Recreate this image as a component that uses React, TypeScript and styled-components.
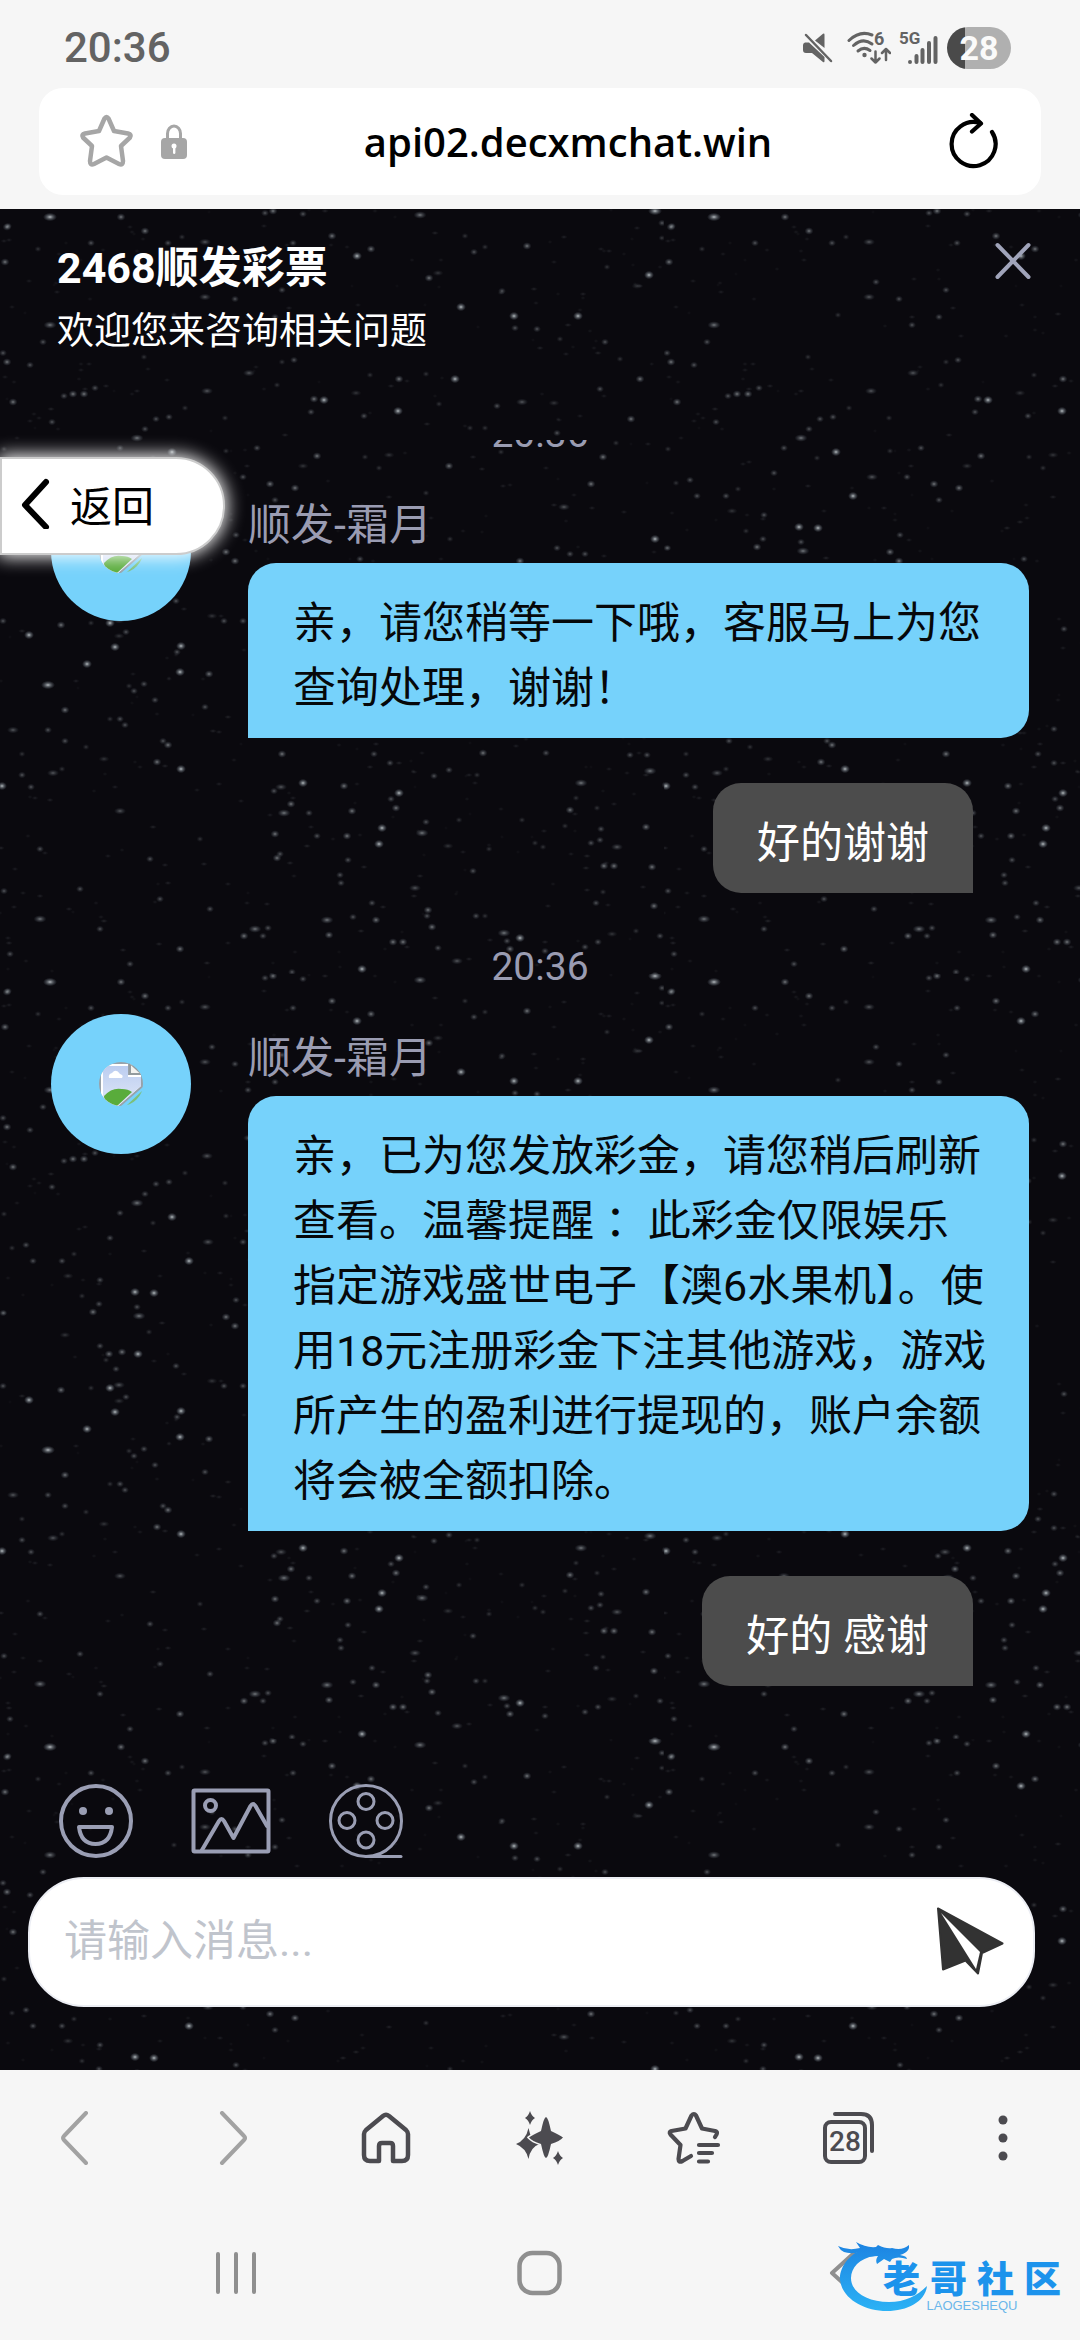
import React from "react";
import styled, { createGlobalStyle } from "styled-components";

const GlobalStyle = createGlobalStyle`
  *, *::before, *::after { box-sizing: border-box; }
  body {
    margin: 0;
    background: #f6f6f6;
    font-family: Roboto, "Noto Sans CJK SC", sans-serif;
  }
  button, input { font: inherit; color: inherit; }
`;

const Page = styled.div`
  display: flex;
  flex-direction: column;
  height: 100vh;
`;

/* ---------- browser chrome ---------- */

const StatusBar = styled.header`
  display: flex;
  align-items: center;
  justify-content: space-between;
  height: 88px;
  padding: 8px 69px 0 64px;
  color: #636363;
`;

const Clock = styled.time`
  font-size: 42px;
  font-weight: 500;
  line-height: 48px;
`;

const StatusIcons = styled.div`
  display: flex;
  align-items: center;
  gap: 8px;

  svg { display: block; }
  svg:first-child { margin-right: 6px; }
`;

const Battery = styled.div`
  display: flex;
  align-items: center;
  justify-content: center;
  width: 64px;
  height: 42px;
  border-radius: 21px;
  background: linear-gradient(90deg, #4a4a4a 18px, #b0b0b0 18px);
  color: #fafafa;
  font-size: 34px;
  font-weight: 700;
`;

const AddressBar = styled.div`
  display: flex;
  align-items: center;
  height: 107px;
  margin: 0 39px 14px;
  padding: 0 42px 0 40px;
  border-radius: 24px;
  background: #fff;
`;

const IconButton = styled.button`
  display: flex;
  align-items: center;
  justify-content: center;
  flex: none;
  padding: 0;
  border: 0;
  background: none;
  cursor: pointer;

  svg { display: block; }
`;

const LockButton = styled(IconButton)`
  margin-left: 27px;
`;

const UrlField = styled.input`
  flex: 1;
  min-width: 0;
  padding: 0;
  border: 0;
  outline: 0;
  background: none;
  color: #000;
  font-family: "Open Sans", "Noto Sans", sans-serif;
  font-size: 40px;
  font-weight: 600;
  text-align: center;
`;

const BrowserBar = styled.nav`
  display: flex;
  height: 136px;
  background: #f6f6f6;

  button { flex: 1; }
`;

const SystemBar = styled.nav`
  position: relative;
  display: flex;
  height: 134px;
  padding: 0 84px;
  background: #f6f6f6;

  button { flex: 1; }
`;

const Watermark = styled.div`
  position: absolute;
  right: 19px;
  bottom: 26px;
  width: 224px;
  height: 78px;
  pointer-events: none;

  svg { display: block; }
`;

const WatermarkText = styled.div`
  position: absolute;
  right: 0;
  bottom: 0;
  display: flex;
  flex-direction: column;
  align-items: center;
`;

const WatermarkName = styled.span`
  display: flex;
  gap: 10px;
  color: #1c93ec;
  font-family: "Noto Sans CJK SC", sans-serif;
  font-size: 37px;
  font-weight: 900;
  line-height: 42px;
`;

const WatermarkLatin = styled.span`
  font-family: "Liberation Sans", sans-serif;
  font-size: 13px;
  line-height: 16px;
  color: #6bb6ea;
`;

/* ---------- chat ---------- */

const Chat = styled.main`
  position: relative;
  isolation: isolate;
  display: flex;
  flex: 1;
  flex-direction: column;
  min-height: 0;
  background: #0a090e;
`;

const Sky = styled.svg`
  position: absolute;
  inset: 0;
  z-index: -1;
  width: 100%;
  height: 100%;
`;

const ChatHeader = styled.div`
  display: flex;
  align-items: flex-start;
  justify-content: space-between;
  height: 231px;
  padding: 29px 47px 0 57px;
  color: #fff;
`;

const ChatTitle = styled.h1`
  margin: 0 0 6px;
  font-size: 43px;
  font-weight: 700;
  line-height: 60px;
`;

const ChatSubtitle = styled.p`
  margin: 0;
  font-size: 37px;
  line-height: 56px;
`;

const CloseButton = styled(IconButton)`
  width: 40px;
  height: 46px;
`;

const BackButton = styled.button`
  position: absolute;
  top: 248px;
  left: 0;
  display: flex;
  align-items: center;
  gap: 20px;
  width: 225px;
  height: 98px;
  padding: 0 0 6px 18px;
  border: 2px solid #ccc;
  border-radius: 0 49px 49px 0;
  background: #fff;
  box-shadow: 0 0 18px 2px #fff;
  color: #000;
  font-size: 42px;
  cursor: pointer;
`;

const Messages = styled.div`
  display: flex;
  flex: 1;
  flex-direction: column;
  justify-content: flex-end;
  min-height: 0;
  padding: 0 51px 95px;
  overflow: hidden;
`;

const Stamp = styled.time`
  flex: none;
  margin: 44px 0 17px;
  color: #9a9cb2;
  font-size: 39px;
  line-height: 60px;
  text-align: center;
`;

const Incoming = styled.article`
  display: flex;
  flex: none;
  align-items: flex-start;
  gap: 57px;
`;

const Avatar = styled.div`
  display: flex;
  align-items: center;
  justify-content: center;
  flex: none;
  width: 140px;
  height: 140px;
  border-radius: 50%;
  background: #76d2fb;
`;

const Content = styled.div`
  flex: 1;
  min-width: 0;
`;

const Sender = styled.div`
  padding: 14px 0 8px;
  color: #9a9cb2;
  font-size: 43px;
  line-height: 60px;
`;

const Bubble = styled.p<{ $own?: boolean }>`
  flex: none;
  align-self: ${(p) => (p.$own ? "flex-end" : "stretch")};
  margin: ${(p) => (p.$own ? "45px 56px 0 0" : "0")};
  padding: ${(p) => (p.$own ? "28px 44px 17px" : "28px 42px 17px 45px")};
  border-radius: ${(p) => (p.$own ? "28px 28px 0 28px" : "28px 28px 28px 0")};
  background: ${(p) => (p.$own ? "#4c4c4c" : "#76d2fb")};
  color: ${(p) => (p.$own ? "#fff" : "#06080a")};
  font-size: 43px;
  line-height: 65px;
`;

const Tools = styled.div`
  display: flex;
  align-items: center;
  gap: 57px;
  height: 80px;
  margin: 0 0 16px;
  padding: 0 58px;
`;

const Composer = styled.form`
  display: flex;
  align-items: center;
  height: 130px;
  margin: 0 45px 63px 28px;
  padding: 0 28px 2px 34px;
  border: 2px solid #eceef4;
  border-radius: 56px;
  background: #fff;
`;

const MessageField = styled.input`
  flex: 1;
  min-width: 0;
  padding: 0;
  border: 0;
  outline: 0;
  background: none;
  color: #333;
  font-size: 43px;

  &::placeholder { color: #c0c4cc; opacity: 1; }
`;

/* ---------- star field ---------- */

const TILE_W = 664;
const TILE_H = 765;

// x, y, brightness (1 faint - 4 bright) inside one tile
const STARS: number[][] = [
  [50,8,4],[8,17,2],[121,8,3],[91,34,2],[145,22,3],[168,34,2],[182,28,1],[205,33,2],[273,2,3],[265,4,2],
  [303,5,2],[332,27,3],[371,40,3],[357,47,4],[420,6,3],[465,27,1],[474,43,2],[485,38,1],[527,37,3],[293,34,2],
  [429,69,3],[438,64,1],[502,82,2],[461,98,4],[514,107,4],[515,119,2],[537,120,2],[5,53,3],[50,116,3],[43,133,2],
  [3,144,2],[7,153,3],[30,156,2],[212,73,2],[235,90,2],[205,88,2],[174,106,1],[248,116,2],[282,81,2],[275,108,2],
  [144,148,1],[294,151,2],[249,164,2],[282,153,1],[277,176,1],[73,185,3],[84,185,3],[64,187,2],[95,179,2],[207,182,2],
  [13,193,3],[185,199,1],[399,170,3],[426,165,1],[455,170,4],[370,166,1],[356,184,1],[314,190,3],[324,191,4],[398,202,4],
  [311,203,2],[364,207,2],[439,195,1],[522,193,2],[497,197,2],[52,213,2],[156,210,2],[169,208,2],[145,220,2],[225,209,1],
  [137,229,3],[120,239,2],[172,243,4],[153,249,1],[226,242,1],[257,239,2],[317,247,3],[303,257,1],[270,275,3],[295,279,3],
  [449,257,3],[470,219,1],[485,219,1],[365,248,1],[389,246,1],[501,243,1],[379,259,1],[243,268,2],[426,284,1],[275,291,2],
  [110,264,2],[208,268,2],[189,287,4],[12,274,1],[26,271,2],[33,287,2],[62,287,2],[74,280,1],[68,302,1],
  [100,306,2],[135,318,4],[154,319,4],[99,330,2],[93,338,3],[137,333,2],[139,342,3],[82,322,1],[4,339,1],[226,343,3],
  [235,352,3],[236,326,2],[149,358,1],[65,361,1],[100,372,2],[109,380,3],[122,378,3],[138,380,4],[106,386,1],[116,395,2],
  [119,411,2],[110,414,4],[91,414,1],[61,416,3],[3,412,2],[29,426,4],[126,423,2],[119,427,1],[115,438,4],[181,437,4],
  [177,443,2],[87,455,4],[180,463,4],[209,465,3],[48,476,4],[144,475,2],[129,477,1],[134,482,2],[155,491,2],[176,392,2],
  [224,412,2],[212,407,1],[243,412,2],[65,501,3],[205,498,2],[120,510,2],[110,510,1],[125,516,2],[13,521,2],[48,521,2],
  [65,532,2],[163,532,2],[168,536,3],[86,538,1],[22,545,1],[104,550,1],[157,553,3],[181,560,4],[62,560,1],
  [2,577,4],[22,566,2],[31,578,2],[53,564,2],[4,682,2],
  [557,224,2],[631,210,3],[616,234,1],[603,248,3],[591,275,3],[564,298,2],[655,330,4],[3,339,2],[557,339,2],[570,345,2],
  [585,345,2],[4,240,1],[655,2,4],[7,18,3],[662,14,2],[649,66,4],[607,58,1],[662,29,1],[38,40,1],[637,77,1],
  [578,107,4],[560,130,1],[605,133,2],[620,150,1],[640,170,3],[600,180,2],[554,194,1],[570,420,3],[590,400,1],[610,440,2],
  [630,462,3],[550,468,1],[520,352,3],[480,372,2],[450,330,1],[430,390,3],[400,420,2],[360,350,2],[330,388,1],[300,432,3],
  [280,360,1],[262,480,2],[310,500,3],[350,480,1],[390,520,2],[440,470,2],[470,510,3],[500,440,1],[530,490,2],
  [282,545,3],[374,545,2],[390,554,2],[303,574,4],[274,582,2],[281,578,2],[344,577,3],[391,590,2],[399,584,4],[396,599,3],
  [382,619,4],[291,595,3],[284,604,3],[309,604,2],[352,602,3],[275,625,3],[317,627,2],[347,627,3],[426,613,2],[422,624,3],
  [379,635,4],[277,649,3],[280,645,2],[348,651,2],[340,666,2],[341,674,2],[415,679,2],[434,567,2],[449,561,2],[477,566,1],
  [483,544,3],[546,544,2],[459,611,1],[448,637,1],[473,662,2],[489,640,1],[522,611,1],[535,634,1],[543,638,1],[570,601,3],
  [581,574,3],[576,589,1],[565,617,1],[601,620,2],[646,618,3],[591,634,2],[600,631,2],[617,638,2],[604,657,3],[614,657,3],
  [652,658,3],[597,599,1],[630,546,2],[647,546,2],[650,562,3],[666,576,3],[603,683,1],[596,694,2],[654,697,3],[668,682,2],
  [372,694,2],[327,711,3],[353,708,2],[376,711,3],[329,726,3],[428,701,3],[427,707,2],[432,718,3],[255,720,3],[268,719,2],
  [244,727,3],[263,727,2],[393,733,3],[403,733,3],[438,739,2],[457,752,2],[362,760,4],[272,768,4],[264,768,2],[292,763,2],
  [303,770,2],[420,770,3],[504,724,3],[520,729,4],[507,732,2],[510,740,3],[545,742,2],[585,738,2],[598,733,2],[612,725,1],
  [476,707,2],[485,707,1],[660,727,2],[672,743,2],[655,767,4],[636,722,1],[120,602,2],[80,680,2],[40,640,2],[150,650,2],
  [200,630,1],[100,720,2],[180,740,3],[40,710,3],[210,700,2],[160,690,2],[10,745,2],[130,755,2],
];

// Dust between the listed stars, from a small fixed-seed generator
const DUST: number[][] = (() => {
  let seed = 7;
  const next = () => {
    seed = (seed * 16807) % 2147483647;
    return seed / 2147483647;
  };
  return Array.from({ length: 420 }, () => [
    Math.round(next() * TILE_W),
    Math.round(next() * TILE_H),
    next(),
  ]);
})();

const StarField = () => (
  <Sky aria-hidden="true">
    <defs>
      <radialGradient id="star">
        <stop offset="0" stopColor="#d5dde0" />
        <stop offset="0.4" stopColor="#a0a9b0" stopOpacity="0.6" />
        <stop offset="1" stopColor="#6f7c88" stopOpacity="0" />
      </radialGradient>
      <pattern id="sky" width={TILE_W} height={TILE_H} patternUnits="userSpaceOnUse">
        {DUST.map(([x, y, b], i) => (
          <ellipse key={`d${i}`} cx={x} cy={y} rx={2 + b * 2} ry={2} fill="url(#star)" opacity={0.04 + b * 0.12} />
        ))}
        {STARS.map(([x, y, b], i) => (
          <ellipse key={i} cx={x} cy={y} rx={3 + b * 0.5 + (i % 7 === 0 ? 2 : 0)} ry={2.6 + b * 0.4} fill="url(#star)" opacity={b === 4 ? 0.85 : 0.08 + b * 0.15} />
        ))}
      </pattern>
    </defs>
    <rect width="100%" height="100%" fill="url(#sky)" />
  </Sky>
);

/* ---------- icons ---------- */

const line = {
  fill: "none",
  stroke: "currentColor",
  strokeLinecap: "round" as const,
  strokeLinejoin: "round" as const,
};

const MuteIcon = () => (
  <svg width="30" height="30" viewBox="0 0 30 30" fill="currentColor">
    <path d="M12 7.500 20 .8q1.500-1 1.500 1V15z" />
    <path d="M2 9.500h4L21.500 24v4q0 2-1.500 1L9 20H3q-3 0-3-3v-5q0-2 2-2.500z" />
    <path d="M3 2 28 28" {...line} strokeWidth="2.500" />
  </svg>
);

const WifiIcon = () => (
  <svg width="44" height="42" viewBox="0 -4 44 42" fill="currentColor">
    <g {...line} strokeWidth="3">
      <path d="M2 9.500Q13-1 25 4" />
      <path d="M6.500 14.500Q16 6 25 13" />
      <path d="M11 20Q17 15 23 19.500" />
      <path d="M28.500 20.500v11m-4-4 4 4 4-4M39 29V18m-4 4 4-4 4 4" strokeWidth="2.500" />
    </g>
    <circle cx="17.500" cy="24" r="2.200" />
    <text x="27" y="14" fontSize="18" fontWeight="700">6</text>
  </svg>
);

const SignalIcon = () => (
  <svg width="40" height="42" viewBox="0 -4 40 42" fill="currentColor">
    <text x="0" y="13" fontSize="17" fontWeight="700">5G</text>
    <g {...line} strokeWidth="4">
      <path d="M11 31v.1M17.500 25v6M23.500 19v12M30 12v19M36.500 7v24" />
    </g>
  </svg>
);

const StarIcon = () => (
  <svg width="55" height="55" viewBox="0 0 55 55" {...line} strokeWidth="4.500" color="#a6a6a6">
    <path d="M25.500 4.500q2-3 4 0L35 17l14 2.500q4 1 2 4L42 32l2 15q0 5-4 3l-12.500-6.500L15 50q-4 2-4-3l2-15-9-8.500q-2-3 2-4L20 17z" />
  </svg>
);

const LockIcon = () => (
  <svg width="26" height="36" viewBox="0 0 26 36">
    <path d="M6.500 15V9.500a6.500 7.500 0 0 1 13 0V15" fill="none" stroke="#a6a6a6" strokeWidth="3" />
    <rect y="14" width="26" height="21" rx="4" fill="#a6a6a6" />
    <circle cx="13" cy="22" r="2.500" fill="#fff" />
    <rect x="12" y="22" width="2.400" height="8" rx="1.200" fill="#fff" />
  </svg>
);

const ReloadIcon = () => (
  <svg width="50" height="58" viewBox="0 0 50 58" {...line} strokeWidth="4.200" color="#000">
    <path d="M43 19A22 22 0 1 1 31 10" />
    <path d="M23 2l9 8.500-9 8" />
  </svg>
);

const CloseIcon = () => (
  <svg width="36" height="38" viewBox="0 0 36 38" {...line} strokeWidth="4" color="#a0a4ba">
    <path d="M2.500 3 33.500 35M33.500 3 2.500 35" />
  </svg>
);

const BackArrow = () => (
  <svg width="30" height="52" viewBox="0 0 30 52" {...line} strokeWidth="6">
    <path d="M26 5 5 28l21 22" />
  </svg>
);

const PhotoPlaceholder = () => (
  <svg width="44" height="44" viewBox="0 0 44 44" role="img" aria-label="头像">
    <defs>
      <clipPath id="disc"><circle cx="22" cy="22" r="22" /></clipPath>
      <linearGradient id="photo" x1="0" y1="0" x2="0" y2="1">
        <stop offset="0" stopColor="#bccdf0" />
        <stop offset="1" stopColor="#e0e8f8" />
      </linearGradient>
    </defs>
    <g clipPath="url(#disc)">
      <path d="M0 0h30l14 13v12L22 44H0z" fill="#98a2aa" />
      <path d="M2 2h27v11h13v11L19 44H2z" fill="#fff" />
      <path d="M4 4h25v11h13v9L19 44H4z" fill="url(#photo)" />
      <path d="M10 16q-1-4 3-5 4-5 8 1 4 1 2 4z" fill="#fff" />
      <path d="M5 34q8-9 18-7 6 0 10 3L18 44H6z" fill="#59ac3b" />
      <path d="M31 1v11h12z" fill="#f2f2ef" stroke="#939b9e" strokeWidth="2" />
      <path d="M27 44l16-15v3L32 44z" fill="#7cc07a" />
    </g>
  </svg>
);

const SmileIcon = () => (
  <svg width="76" height="76" viewBox="0 0 76 76" {...line} strokeWidth="4">
    <circle cx="38" cy="38" r="35" />
    <path d="M21 44h33q-2 17-16.500 17T21 44z" />
    <circle cx="25" cy="28" r="4" fill="currentColor" stroke="none" />
    <circle cx="51" cy="28" r="4" fill="currentColor" stroke="none" />
  </svg>
);

const ImageIcon = () => (
  <svg width="80" height="66" viewBox="0 0 80 66" {...line} strokeWidth="4">
    <rect x="2.500" y="2.500" width="75" height="61" rx="1" />
    <circle cx="19.500" cy="17.500" r="5.500" />
    <path d="m11 62 17-29q2.500-4 5 0l9.500 17 17-32q2.500-4 5 0L76 38" />
  </svg>
);

const ReelIcon = () => (
  <svg width="76" height="76" viewBox="0 0 76 76" {...line} strokeWidth="3">
    <circle cx="38" cy="38" r="35.500" />
    <circle cx="38" cy="18.500" r="8" />
    <circle cx="38" cy="57" r="8" />
    <circle cx="19" cy="37.500" r="8" />
    <circle cx="57" cy="37.500" r="8" />
    <path d="M38 73.500h35" />
  </svg>
);

const SendIcon = () => (
  <svg width="68" height="68" viewBox="0 0 68 68">
    <path
      d="M1 1.500 65.500 36.500 45 46 41 66.500 28.500 53.500 6 62.500z"
      fill="#323232"
      stroke="#323232"
      strokeWidth="2"
      strokeLinejoin="round"
    />
    <path d="M4 6 43 45l-4 17z" fill="#fff" />
  </svg>
);

const Chevron = ({ flip = false }: { flip?: boolean }) => (
  <svg width="34" height="54" viewBox="0 0 34 54" {...line} strokeWidth="4" color="#a2a2a2">
    <path d={flip ? "M8 2l22 23q2 2 0 4L8 52" : "M26 2 4 25q-2 2 0 4l22 23"} />
  </svg>
);

const HomeIcon = () => (
  <svg width="50" height="52" viewBox="0 0 50 52" {...line} strokeWidth="4.500">
    <path d="M22 4q3-2.500 6 0l17 14q2 2 2 4v21q0 6-6 6h-9V34q0-3-3-3h-8q-3 0-3 3v15H9q-6 0-6-6V22q0-2 2-4z" />
  </svg>
);

const SparkleIcon = () => (
  <svg width="48" height="54" viewBox="0 0 48 54" fill="#4c4b50">
    <path d="M12.500 17q2 12 11 16-9 3-11 15Q10 37 0 33q10-4 12.500-16z" />
    <path
      d="M30 6q2 0 5 14 9 4 12 6.500-3 3.500-12 6.500-3 14-5 14t-5-14q-9-3-12-6.500 3-2.500 12-6.500 3-14 5-14z"
      stroke="#f6f6f6"
      strokeWidth="3"
      paintOrder="stroke"
    />
    <path d="M14 0q1.500 5 5 7-3.500 2-5 7-1.500-5-5-7 3.500-2 5-7zM42 40q1.500 5 5 7-3.500 2-5 7-1.500-5-5-7 3.500-2 5-7z" />
  </svg>
);

const BookmarksIcon = () => (
  <svg width="54" height="54" viewBox="0 0 54 54" {...line} strokeWidth="4.200">
    <path d="M48 26q4-5 0-6l-13-2.500-6-13q-2-3-4.500 0l-6 13-14 2.500q-3 1-1 3.500L13.500 34 11.500 48q0 4 4 2l8.500-5" />
    <path d="M32 34h19M32 42h13M32 50.500h9" />
  </svg>
);

const TabsIcon = () => (
  <svg width="54" height="54" viewBox="0 0 54 54" {...line} strokeWidth="4">
    <rect x="3" y="11" width="40" height="40" rx="6" />
    <path d="M13 3h26q11 0 11 11v26" />
    <text x="23" y="40" fontSize="28" fontWeight="500" textAnchor="middle" fill="currentColor" stroke="none">28</text>
  </svg>
);

const MoreIcon = () => (
  <svg width="10" height="46" viewBox="0 0 10 46" fill="currentColor">
    <circle cx="5" cy="5" r="4.500" />
    <circle cx="5" cy="23" r="4.500" />
    <circle cx="5" cy="41" r="4.500" />
  </svg>
);

const RecentsIcon = () => (
  <svg width="42" height="44" viewBox="0 0 42 44" {...line} strokeWidth="4">
    <path d="M3 3v38M21 3v38M39 3v38" />
  </svg>
);

const HomeKeyIcon = () => (
  <svg width="46" height="46" viewBox="0 0 46 46" {...line} strokeWidth="4.500">
    <rect x="2.500" y="3" width="40" height="40" rx="13" />
  </svg>
);

const BackKeyIcon = () => (
  <svg width="30" height="44" viewBox="0 0 30 44" {...line} strokeWidth="4">
    <path d="M25 2 3 22l22 20" />
  </svg>
);

const DragonMark = () => (
  <svg width="224" height="78" viewBox="0 0 224 78">
    <defs>
      <linearGradient id="dragon" x1="0" y1="0" x2="0" y2="78" gradientUnits="userSpaceOnUse">
        <stop offset="0" stopColor="#1b7fe0" />
        <stop offset="1" stopColor="#2cb4f6" />
      </linearGradient>
    </defs>
    <g fill="url(#dragon)">
      <path d="M32 11C12 16 2 32 3 44c2 18 23 31 47 31 20 0 38-9 40-25-10 10-22 16-38 16-22 0-38-10-38-24 0-10 8-20 24-22z" />
      <path d="M1 10q10 5 22 2l-4-6q10 6 20 5l2-2q8 4 14 3 10 3 17-3 1 6-6 9l-3 1q7 1 7 4-9-3-15 0l-2 3-6-3-7 5q-2-4 1-8-9 0-14 2 2-6 6-8-18 5-26 2Q3 14 1 10z" />
    </g>
  </svg>
);

const Message = ({ children }: { children: React.ReactNode }) => (
  <Incoming>
    <Avatar><PhotoPlaceholder /></Avatar>
    <Content>
      <Sender>顺发-霜月</Sender>
      <Bubble>{children}</Bubble>
    </Content>
  </Incoming>
);

const ToolButton = styled(IconButton)`
  color: #9a9eb4;
`;

const DarkButton = styled(IconButton)`
  color: #4c4b50;
`;

const KeyButton = styled(IconButton)`
  color: #8f8f8f;
`;

export default function App() {
  return (
    <Page>
      <GlobalStyle />
      <StatusBar>
        <Clock>20:36</Clock>
        <StatusIcons>
          <MuteIcon />
          <WifiIcon />
          <SignalIcon />
          <Battery>28</Battery>
        </StatusIcons>
      </StatusBar>
      <AddressBar>
        <IconButton aria-label="收藏"><StarIcon /></IconButton>
        <LockButton aria-label="网站信息"><LockIcon /></LockButton>
        <UrlField aria-label="网址" defaultValue="api02.decxmchat.win" />
        <IconButton aria-label="刷新"><ReloadIcon /></IconButton>
      </AddressBar>

      <Chat>
        <StarField />
        <ChatHeader>
          <div>
            <ChatTitle>2468顺发彩票</ChatTitle>
            <ChatSubtitle>欢迎您来咨询相关问题</ChatSubtitle>
          </div>
          <CloseButton aria-label="关闭"><CloseIcon /></CloseButton>
        </ChatHeader>

        <Messages>
          <Stamp>20:36</Stamp>
          <Message>亲，请您稍等一下哦，客服马上为您查询处理，谢谢！</Message>
          <Bubble $own>好的谢谢</Bubble>
          <Stamp>20:36</Stamp>
          <Message>
            亲，已为您发放彩金，请您稍后刷新查看。温馨提醒 ：此彩金仅限娱乐指定游戏盛世电子【澳6水果机】。使用18元注册彩金下注其他游戏，游戏所产生的盈利进行提现的，账户余额将会被全额扣除。
          </Message>
          <Bubble $own>好的 感谢</Bubble>
        </Messages>

        <Tools>
          <ToolButton aria-label="表情"><SmileIcon /></ToolButton>
          <ToolButton aria-label="图片"><ImageIcon /></ToolButton>
          <ToolButton aria-label="视频"><ReelIcon /></ToolButton>
        </Tools>
        <Composer onSubmit={(e) => e.preventDefault()}>
          <MessageField aria-label="消息" placeholder="请输入消息..." />
          <IconButton aria-label="发送"><SendIcon /></IconButton>
        </Composer>

        <BackButton>
          <BackArrow />
          返回
        </BackButton>
      </Chat>

      <BrowserBar>
        <DarkButton aria-label="后退"><Chevron /></DarkButton>
        <DarkButton aria-label="前进"><Chevron flip /></DarkButton>
        <DarkButton aria-label="主页"><HomeIcon /></DarkButton>
        <DarkButton aria-label="智能助手"><SparkleIcon /></DarkButton>
        <DarkButton aria-label="书签"><BookmarksIcon /></DarkButton>
        <DarkButton aria-label="标签页"><TabsIcon /></DarkButton>
        <DarkButton aria-label="更多"><MoreIcon /></DarkButton>
      </BrowserBar>
      <SystemBar>
        <KeyButton aria-label="最近任务"><RecentsIcon /></KeyButton>
        <KeyButton aria-label="主屏幕"><HomeKeyIcon /></KeyButton>
        <KeyButton aria-label="返回键"><BackKeyIcon /></KeyButton>
        <Watermark>
          <DragonMark />
          <WatermarkText>
            <WatermarkName>
              <span>老</span>
              <span>哥</span>
              <span>社</span>
              <span>区</span>
            </WatermarkName>
            <WatermarkLatin>LAOGESHEQU</WatermarkLatin>
          </WatermarkText>
        </Watermark>
      </SystemBar>
    </Page>
  );
}
